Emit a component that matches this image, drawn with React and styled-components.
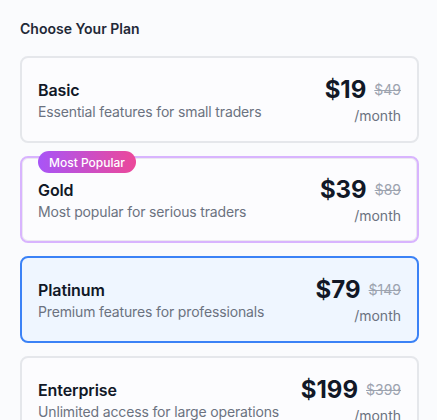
import React from 'react';
import styled, { createGlobalStyle } from 'styled-components';

const GlobalStyle = createGlobalStyle`
  * { box-sizing: border-box; }
  body {
    margin: 0;
    background: #fafbfd;
    font-family: Inter, "Noto Sans", sans-serif;
    color: #111827;
  }
`;

const plans = [
    { name: 'Basic', desc: 'Essential features for small traders', price: '$19', old: '$49' },
    { name: 'Gold', desc: 'Most popular for serious traders', price: '$39', old: '$89', badge: 'Most Popular', variant: 'popular' },
    { name: 'Platinum', desc: 'Premium features for professionals', price: '$79', old: '$149', variant: 'selected' },
    { name: 'Enterprise', desc: 'Unlimited access for large operations', price: '$199', old: '$399' }
];

const Wrapper = styled.div`
  padding: 19px 18px 20px 20px;
`;

const Title = styled.h2`
  margin: 0 0 17px;
  font-size: 14px;
  line-height: 20px;
  font-weight: 600;
  color: #1f2937;
`;

const List = styled.div`
  display: flex;
  flex-direction: column;
  gap: 13px;
`;

const Card = styled.div`
  position: relative;
  display: flex;
  align-items: center;
  justify-content: space-between;
  height: 87px;
  padding: 0 16px;
  border-radius: 8px;
  border: 2px solid ${({ $variant }) =>
        $variant === 'selected' ? '#3b82f6' : $variant === 'popular' ? '#d8b4fe' : '#e5e7eb'};
  background: ${({ $variant }) => ($variant === 'selected' ? '#eff6ff' : '#fcfcfe')};
  box-shadow: ${({ $variant }) => ($variant === 'popular' ? 'inset 0 0 0 1px #ebe8f0' : 'none')};
`;

const Badge = styled.span`
  position: absolute;
  top: -7px;
  left: 16px;
  height: 22px;
  padding: 0 11px;
  display: flex;
  align-items: center;
  border-radius: 999px;
  background: linear-gradient(90deg, #a855f7, #ec4899);
  color: #fff;
  font-size: 12px;
  font-weight: 500;
`;

const Info = styled.div`
  display: flex;
  flex-direction: column;
`;

const Name = styled.div`
  font-size: 16px;
  line-height: 24px;
  font-weight: 600;
  letter-spacing: -0.1px;
  color: #111827;
`;

const Desc = styled.div`
  font-size: 14px;
  line-height: 20px;
  letter-spacing: -0.15px;
  color: #6b7280;
`;

const PriceCol = styled.div`
  display: flex;
  flex-direction: column;
  align-items: flex-end;
  margin-top: 1px;
`;

const PriceRow = styled.div`
  display: flex;
  align-items: center;
  gap: 8px;
`;

const Price = styled.span`
  font-size: 24px;
  line-height: 32px;
  font-weight: 700;
  color: #111827;
`;

const OldPrice = styled.span`
  font-size: 14px;
  line-height: 20px;
  color: #9ca3af;
  text-decoration: line-through;
`;

const Period = styled.span`
  font-size: 14px;
  line-height: 20px;
  color: #6b7280;
`;

const PlanCard = ({ plan }) => (
    <Card $variant={plan.variant}>
        {plan.badge && <Badge>{plan.badge}</Badge>}
        <Info>
            <Name>{plan.name}</Name>
            <Desc>{plan.desc}</Desc>
        </Info>
        <PriceCol>
            <PriceRow>
                <Price>{plan.price}</Price>
                <OldPrice>{plan.old}</OldPrice>
            </PriceRow>
            <Period>/month</Period>
        </PriceCol>
    </Card>
);

const App = () => (
    <>
        <GlobalStyle />
        <Wrapper>
            <Title>Choose Your Plan</Title>
            <List>
                {plans.map((plan) => (
                    <PlanCard key={plan.name} plan={plan} />
                ))}
            </List>
        </Wrapper>
    </>
);

export default App;
